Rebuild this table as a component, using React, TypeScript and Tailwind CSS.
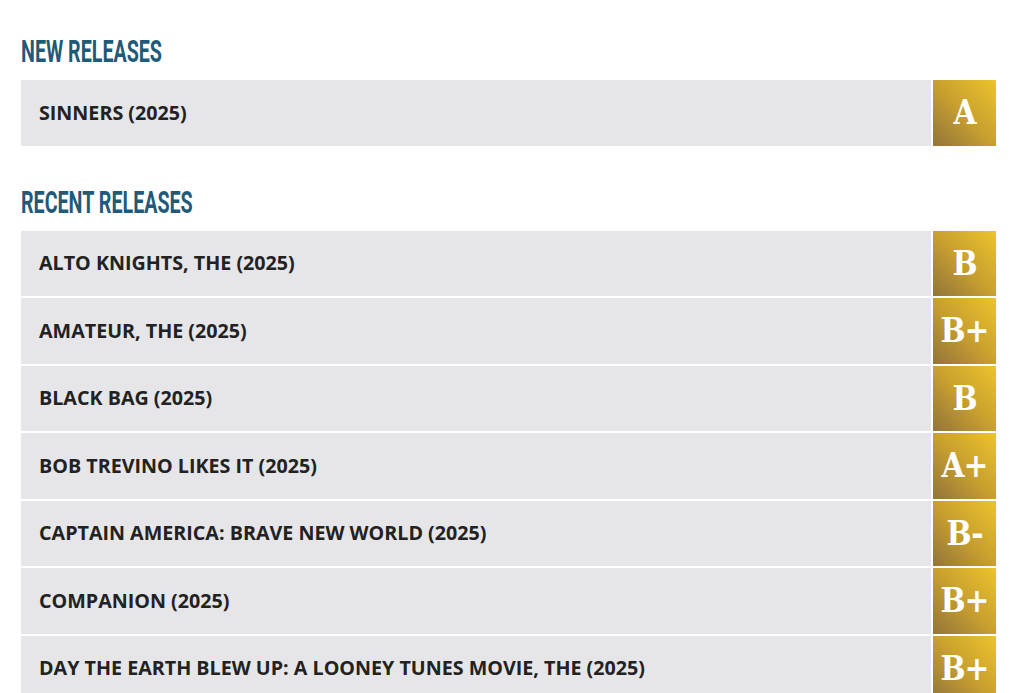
import React from 'react';

const newReleases = [{ title: 'SINNERS (2025)', grade: 'A' }];

const recentReleases = [
  { title: 'ALTO KNIGHTS, THE (2025)', grade: 'B' },
  { title: 'AMATEUR, THE (2025)', grade: 'B+' },
  { title: 'BLACK BAG (2025)', grade: 'B' },
  { title: 'BOB TREVINO LIKES IT (2025)', grade: 'A+' },
  { title: 'CAPTAIN AMERICA: BRAVE NEW WORLD (2025)', grade: 'B-' },
  { title: 'COMPANION (2025)', grade: 'B+' },
  { title: 'DAY THE EARTH BLEW UP: A LOONEY TUNES MOVIE, THE (2025)', grade: 'B+' },
];

function Heading({ children }: { children: React.ReactNode }) {
  return (
    <h2 className="h-[38px] overflow-visible whitespace-nowrap font-['Roboto',sans-serif] text-[32px] font-bold leading-[38px] text-[#1f5a7a]">
      <span className="inline-block origin-left scale-x-[0.615]">{children}</span>
    </h2>
  );
}

function Row({ title, grade }: { title: string; grade: string }) {
  return (
    <div className="flex h-[65.5px] gap-[2px]">
      <div className="flex flex-1 items-center bg-[#e6e6e8] pl-[18px] font-['Open_Sans',sans-serif] text-[19.7px] font-bold text-[#222]">
        {title}
      </div>
      <div className="flex w-[63px] items-center justify-center bg-linear-to-bl from-[#ecc42b] via-[#c9a02e] to-[#927438] font-['DejaVu_Serif',serif] text-[33px] font-bold font-stretch-condensed tracking-[-1px] text-white">
        {grade}
      </div>
    </div>
  );
}

export default function App() {
  return (
    <div className="min-h-screen w-full bg-white">
      <div className="w-[975px] ml-[21px] pt-[32px]">
        <Heading>NEW RELEASES</Heading>
        <div className="mt-[10px] flex flex-col gap-[2px]">
          {newReleases.map((r) => (
            <Row key={r.title} {...r} />
          ))}
        </div>
        <div className="mt-[37px]">
          <Heading>RECENT RELEASES</Heading>
        </div>
        <div className="mt-[10px] flex flex-col gap-[2px]">
          {recentReleases.map((r) => (
            <Row key={r.title} {...r} />
          ))}
        </div>
      </div>
    </div>
  );
}
